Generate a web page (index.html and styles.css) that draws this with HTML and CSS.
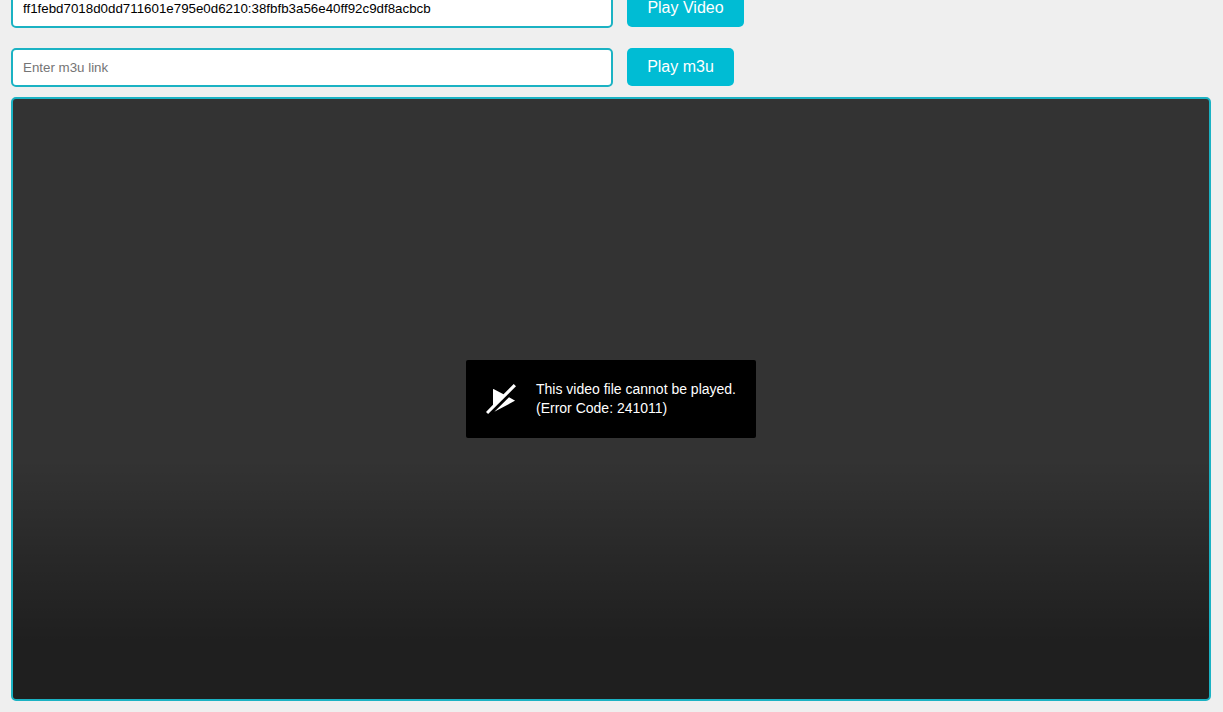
FILE: index.html
```html
<!DOCTYPE html>
<html lang="en">
<head>
<meta charset="utf-8">
<title>Video Player</title>
<link rel="stylesheet" href="styles.css">
</head>
<body>
<main class="page">
  <div class="row">
    <input class="field" type="text" value="ff1febd7018d0dd711601e795e0d6210:38fbfb3a56e40ff92c9df8acbcb">
    <button class="button" type="button">Play Video</button>
  </div>
  <div class="row">
    <input class="field" type="text" placeholder="Enter m3u link">
    <button class="button button-m3u" type="button">Play m3u</button>
  </div>
  <section class="player">
    <div class="error">
      <svg class="error-icon" viewBox="0 0 36 36" aria-hidden="true"><path d="M34.6 20.2L10 33.2 27.6 16l7 3.7a.4.4 0 0 1 .2.5.4.4 0 0 1-.2.2zM33.3 0L21 12.2 9 6c-.2-.3-.6 0-.6.5V25L0 33.6 2.5 36 36 2.7z"/></svg>
      <div class="error-text">This video file cannot be played.<br>(Error Code: 241011)</div>
    </div>
  </section>
</main>
</body>
</html>
```
FILE: styles.css
```css
* {
  box-sizing: border-box;
}

body {
  margin: 0;
  height: 712px;
  overflow: hidden;
  background: #efefef;
  font-family: "Liberation Sans", Arial, sans-serif;
}

.page {
  margin: -11px 12px 0 11px;
  display: flow-root;
}

.row {
  display: flex;
  align-items: flex-start;
  gap: 14px;
  height: 39px;
  margin-bottom: 20px;
}

.row + .row {
  margin-bottom: 10px;
}

.field {
  width: 602px;
  height: 39px;
  margin: 0;
  padding: 10px;
  border: 2px solid #1bb2c3;
  border-radius: 5px;
  background: #fff;
  color: #000;
  font: 13.333px "Liberation Sans", Arial, sans-serif;
}

.field::placeholder {
  color: #757575;
}

.button {
  width: 117px;
  height: 38px;
  margin: 0;
  padding: 0;
  border: 0;
  border-radius: 5px;
  background: #00bcd4;
  color: #fff;
  font: 16px "Liberation Sans", Arial, sans-serif;
}

.button-m3u {
  width: 107px;
}

.player {
  display: flex;
  align-items: center;
  justify-content: center;
  height: 604px;
  border: 2px solid #1bb2c3;
  border-radius: 5px;
  background: linear-gradient(180deg, transparent, rgba(0, 0, 0, 0.4) 77%, rgba(0, 0, 0, 0.4)) bottom / 100% 240px no-repeat #333;
}

.error {
  display: flex;
  align-items: center;
  width: 290px;
  height: 78px;
  padding-left: 20px;
  border-radius: 2px;
  background: #000;
  color: #fff;
}

.error-icon {
  width: 30px;
  height: 30px;
  margin-right: 20px;
  fill: currentColor;
}

.error-text {
  font-size: 14px;
  line-height: 19px;
  white-space: nowrap;
}
```
